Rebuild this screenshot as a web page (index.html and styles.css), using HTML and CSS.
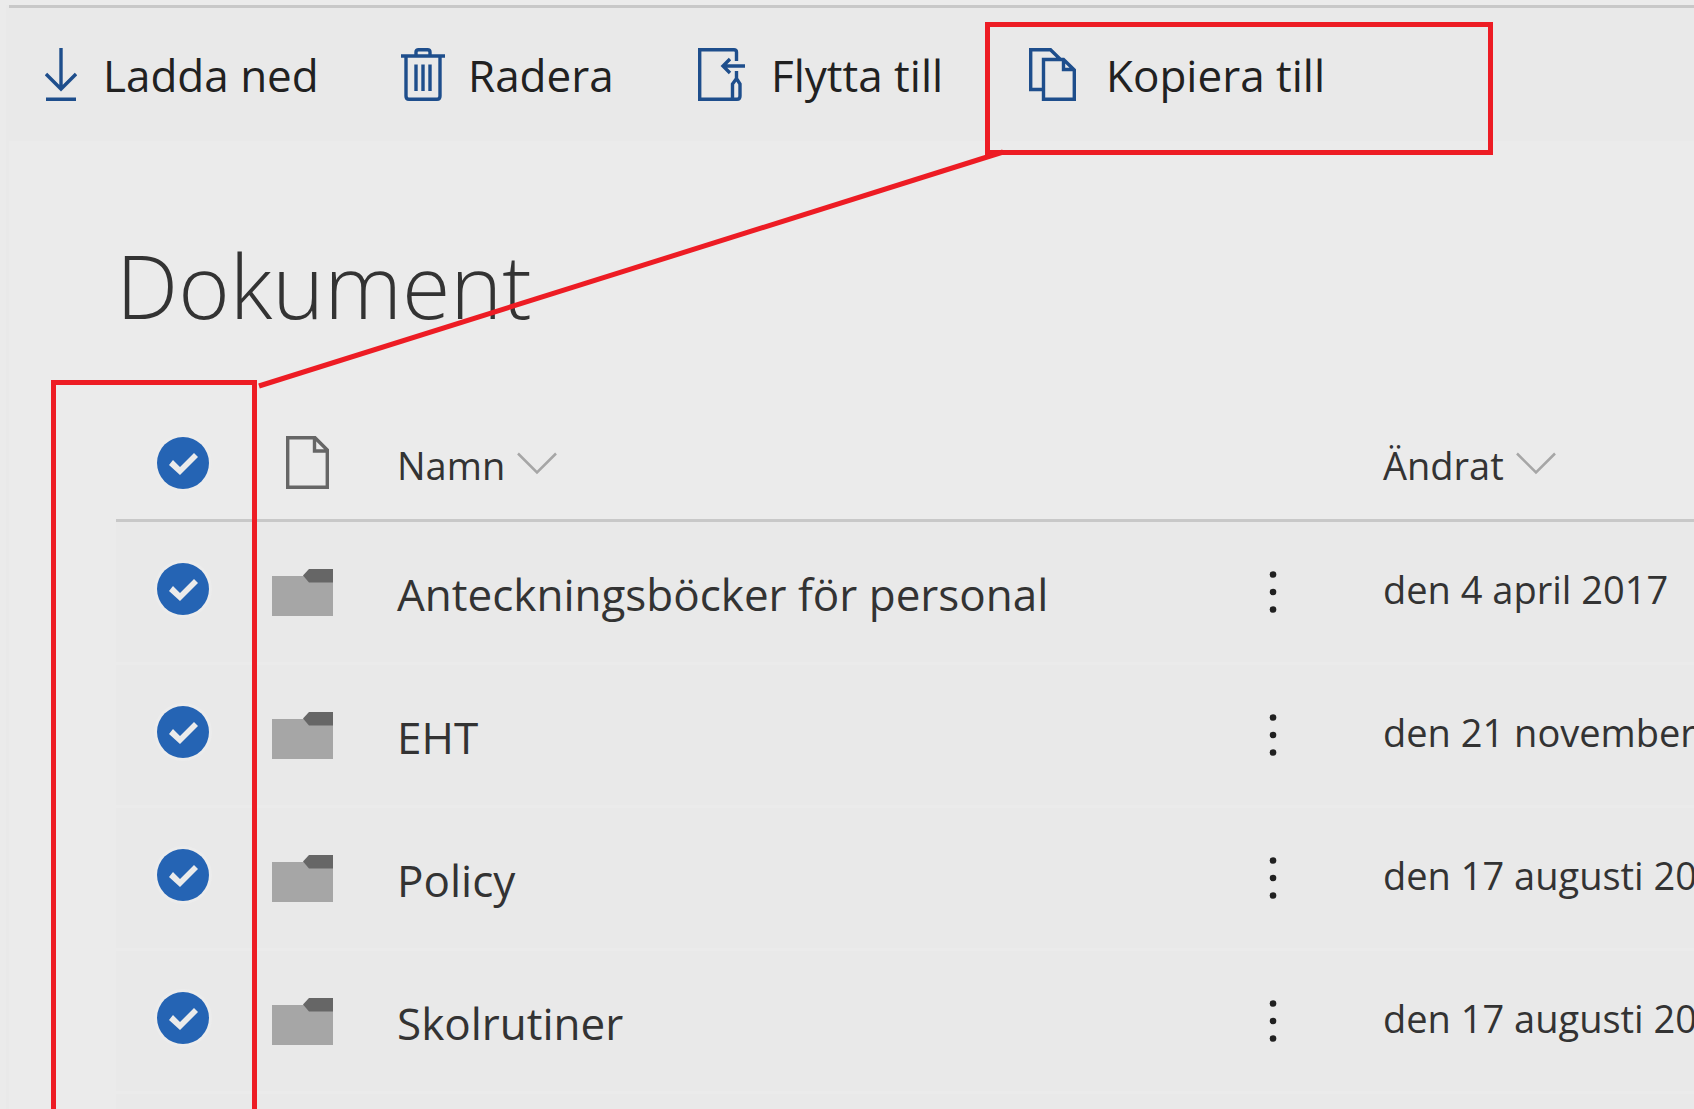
FILE: index.html
```html
<!DOCTYPE html>
<html lang="sv">
<head>
<meta charset="utf-8">
<title>Dokument</title>
<link rel="stylesheet" href="styles.css">
</head>
<body>
<svg class="symbols" aria-hidden="true">
  <symbol id="chevron" viewBox="0 0 40 24"><path d="M1 1.500L20 20.500L39 1.500" fill="none" stroke="#a6a6a6" stroke-width="2.500"/></symbol>
  <symbol id="folder" viewBox="0 0 61 47"><path d="M0 7H61V47H0Z" fill="#a6a6a6"/><path d="M31 6.500L37 0H61V13.500H37Z" fill="#666"/></symbol>
  <symbol id="dots" viewBox="0 0 8 42"><g fill="#212121"><circle cx="4" cy="3.500" r="3.300"/><circle cx="4" cy="21" r="3.300"/><circle cx="4" cy="38.500" r="3.300"/></g></symbol>
</svg>
<div class="page">
  <nav class="toolbar" aria-label="Kommandon">
    <button class="command command-download" type="button">
      <svg width="32" height="53" viewBox="0 0 32 53"><path d="M16 0V41M1 26L16 41L31 26M1 51.300H31" /></svg>
      <span>Ladda ned</span>
    </button>
    <button class="command command-delete" type="button">
      <svg width="44" height="53" viewBox="0 0 44 53"><path d="M0 8H44M5 8V48Q5 51.300 8 51.300H36Q39 51.300 39 48V8M15 8V4Q15 1.700 17.500 1.700H26.500Q29 1.700 29 4V8M15 16.500V43M22 16.500V43M29 16.500V43"/></svg>
      <span>Radera</span>
    </button>
    <button class="command command-move" type="button">
      <svg width="47" height="53" viewBox="0 0 47 53"><path d="M38.500 13V4Q38.500 1.700 36 1.700H1.700V51.300H39Q42 51.300 42 48V36L38.500 30.500L34.500 36V51M38.500 23V31M47 18H25M32 11L25 18L32 25"/></svg>
      <span>Flytta till</span>
    </button>
    <button class="command command-copy" type="button">
      <svg width="47" height="53" viewBox="0 0 47 53"><path d="M13 41.500H1.700V1.700H21.500L31 11M14.500 11.500H34.500L45.300 22V51.300H14.500ZM34.500 11V21.500H45"/></svg>
      <span>Kopiera till</span>
    </button>
  </nav>
  <main>
    <h1>Dokument</h1>
    <table>
      <colgroup><col class="col-check"><col class="col-type"><col class="col-name"><col class="col-more"><col></colgroup>
      <thead>
        <tr>
          <th><input type="checkbox" checked aria-label="Markera alla"></th>
          <th><svg class="icon-file" width="43" height="53" viewBox="0 0 43 53" role="img" aria-label="Filtyp"><path d="M1.700 1.700H29L41.300 14V51.300H1.700ZM28.500 1.500V15H41.500"/></svg></th>
          <th><button class="sort" type="button">Namn<svg width="40" height="24"><use href="#chevron"/></svg></button></th>
          <th></th>
          <th><button class="sort" type="button">Ändrat<svg width="40" height="24"><use href="#chevron"/></svg></button></th>
        </tr>
      </thead>
      <tbody>
        <tr>
          <td><input type="checkbox" checked aria-label="Markera Anteckningsböcker för personal"></td>
          <td><svg width="61" height="47"><use href="#folder"/></svg></td>
          <td class="name"><a href="#">Anteckningsböcker för personal</a></td>
          <td><button class="more" type="button" aria-label="Mer"><svg width="8" height="42"><use href="#dots"/></svg></button></td>
          <td class="date">den 4 april 2017</td>
        </tr>
        <tr>
          <td><input type="checkbox" checked aria-label="Markera EHT"></td>
          <td><svg width="61" height="47"><use href="#folder"/></svg></td>
          <td class="name"><a href="#">EHT</a></td>
          <td><button class="more" type="button" aria-label="Mer"><svg width="8" height="42"><use href="#dots"/></svg></button></td>
          <td class="date">den 21 november</td>
        </tr>
        <tr>
          <td><input type="checkbox" checked aria-label="Markera Policy"></td>
          <td><svg width="61" height="47"><use href="#folder"/></svg></td>
          <td class="name"><a href="#">Policy</a></td>
          <td><button class="more" type="button" aria-label="Mer"><svg width="8" height="42"><use href="#dots"/></svg></button></td>
          <td class="date">den 17 augusti 20</td>
        </tr>
        <tr>
          <td><input type="checkbox" checked aria-label="Markera Skolrutiner"></td>
          <td><svg width="61" height="47"><use href="#folder"/></svg></td>
          <td class="name"><a href="#">Skolrutiner</a></td>
          <td><button class="more" type="button" aria-label="Mer"><svg width="8" height="42"><use href="#dots"/></svg></button></td>
          <td class="date">den 17 augusti 20</td>
        </tr>
        <tr><td></td><td></td><td></td><td></td><td></td></tr>
      </tbody>
    </table>
  </main>
</div>
<svg class="markup" aria-hidden="true">
  <rect x="987.500" y="24.500" width="503" height="128"/>
  <path d="M53.500 1200V382.500H254.500V1200"/>
  <path d="M259 386L1003 152"/>
</svg>
</body>
</html>
```
FILE: styles.css
```css
* {
  box-sizing: border-box;
}

body {
  position: relative;
  height: 100vh;
  margin: 0;
  padding: 5px 0 0 6px;
  overflow: hidden;
  background: #ebebeb;
  color: #333;
  font-family: "Open Sans", "Noto Sans", sans-serif;
}

svg {
  display: block;
  flex: none;
}

.symbols {
  position: absolute;
  width: 0;
  height: 0;
}

button {
  margin: 0;
  padding: 0;
  border: 0;
  background: none;
  color: inherit;
  font: inherit;
}

.page {
  border-left: 3px solid #e9e9e9;
}

.toolbar {
  display: flex;
  height: 136px;
  padding: 40px 0 0 36px;
  border-top: 3px solid #c8c8c8;
  background: #e9e9e9;
}

.command {
  display: flex;
  align-items: center;
  gap: 26px;
  height: 53px;
  color: #212121;
  font-size: 44px;
  line-height: 54px;
  white-space: nowrap;
}

.command path {
  fill: none;
  stroke: #1e4e8c;
  stroke-width: 3.400;
}

.command-download {
  width: 356px;
}

.command-delete {
  gap: 23px;
  width: 297px;
}

.command-move {
  width: 331px;
}

.command-copy {
  gap: 30px;
}

main {
  padding-left: 107px;
}

h1 {
  margin: 84px 0 91px;
  font-size: 88px;
  font-weight: 300;
  line-height: 120px;
}

table {
  width: 100%;
  border-collapse: separate;
  border-spacing: 0;
  table-layout: fixed;
}

.col-check {
  width: 156px;
}

.col-type {
  width: 125px;
}

.col-name {
  width: 850px;
}

.col-more {
  width: 136px;
}

th,
td {
  padding: 0;
  text-align: left;
  font-weight: 400;
  white-space: nowrap;
}

th {
  padding-bottom: 30px;
  border-bottom: 3px solid #c8c8c8;
  vertical-align: bottom;
}

th:first-child,
td:first-child {
  padding-left: 41px;
}

tbody td {
  height: 143px;
  border-bottom: 3px solid #ebebeb;
  background: #e9e9e9;
  vertical-align: middle;
}

input {
  display: block;
  width: 52px;
  height: 52px;
  margin: 0;
  appearance: none;
  border-radius: 50%;
  background: #2564b4;
  box-shadow: 0 0 0 3px #ececec;
}

td input {
  margin-bottom: 6px;
}

input:checked::before {
  content: "";
  display: block;
  width: 52px;
  height: 52px;
  background: #ebebeb;
  clip-path: polygon(12px 28px, 16px 23px, 23px 30px, 37px 16px, 41px 20px, 23px 38px);
}

.icon-file {
  margin-left: 14px;
}

.icon-file path {
  fill: none;
  stroke: #666;
  stroke-width: 3.400;
}

.sort {
  display: flex;
  align-items: center;
  gap: 12px;
  font-size: 38px;
  line-height: 48px;
}

.sort svg {
  margin-bottom: 2px;
}

tbody .name {
  padding-top: 3px;
}

.name a {
  color: inherit;
  font-size: 44px;
  line-height: 60px;
  text-decoration: none;
}

.more {
  display: block;
  padding-left: 22px;
}

.date {
  padding-bottom: 6px;
  font-size: 38px;
}

.markup {
  position: absolute;
  inset: 0;
  width: 100%;
  height: 100%;
  fill: none;
  stroke: #ed1c24;
  stroke-width: 5;
  pointer-events: none;
}
```
